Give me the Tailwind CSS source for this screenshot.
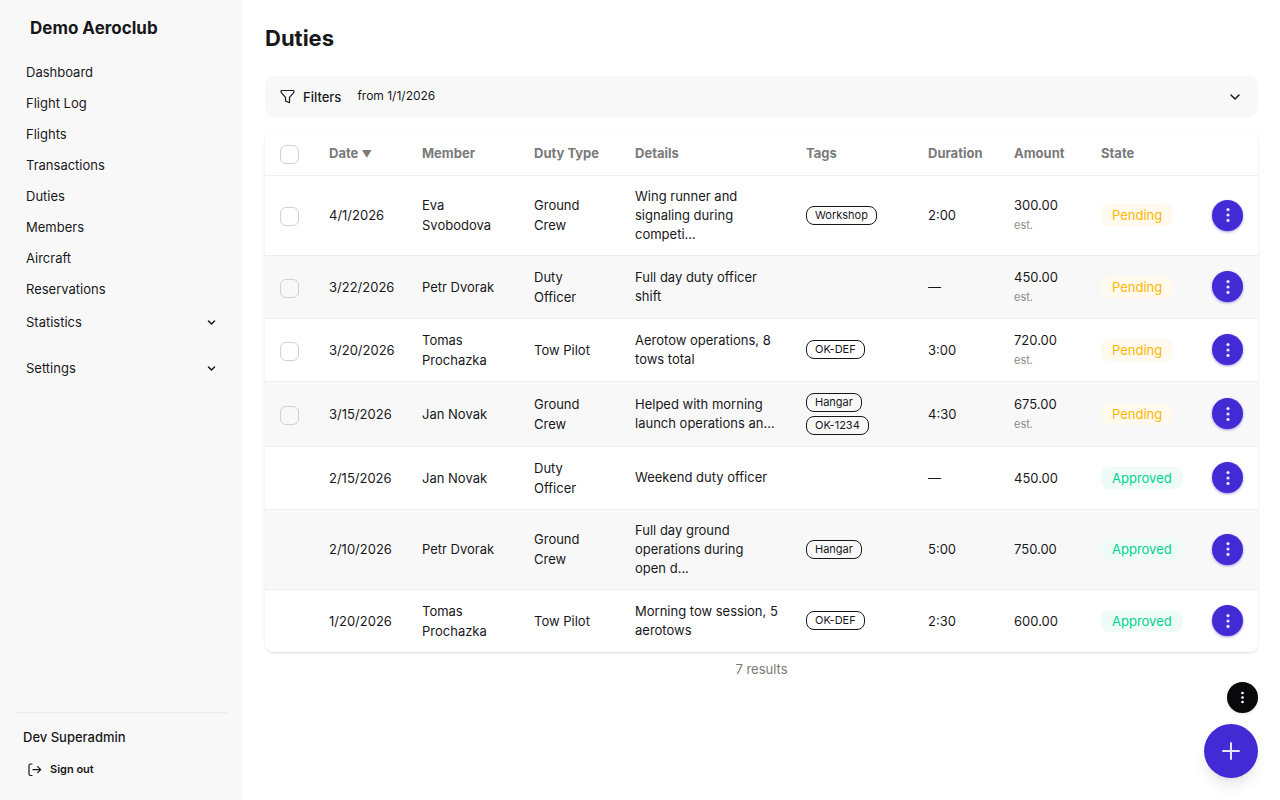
<!DOCTYPE html>
<html lang="en">
<head>
  <meta charset="UTF-8">
  <meta name="viewport" content="width=device-width, initial-scale=1.0">
  <title>Duties - Demo Aeroclub</title>
  <script src="https://cdn.jsdelivr.net/npm/@tailwindcss/browser@4"></script>
</head>
<body class="flex min-h-screen bg-white font-['Inter',sans-serif] text-[13px] leading-5 text-[#18181b]">

  <svg class="hidden">
    <symbol id="dots" viewBox="0 0 20 20">
      <circle cx="10" cy="4" r="1.8" fill="currentColor"/>
      <circle cx="10" cy="10" r="1.8" fill="currentColor"/>
      <circle cx="10" cy="16" r="1.8" fill="currentColor"/>
    </symbol>
    <symbol id="chevron" viewBox="0 0 12 12">
      <path d="M2 4l4 4 4-4" fill="none" stroke="currentColor" stroke-linecap="round" stroke-linejoin="round"/>
    </symbol>
  </svg>

  <!-- Sidebar -->
  <aside class="sticky top-0 flex h-screen w-[242px] shrink-0 flex-col bg-[#f8f8f8] px-[15px]">
    <div class="px-[15px] pt-[17px] text-[17px] font-bold leading-[22px]">Demo Aeroclub</div>
    <nav class="mt-[18px] flex flex-col">
      <a href="#" class="px-[11px] py-[5px] leading-[21px]">Dashboard</a>
      <a href="#" class="px-[11px] py-[5px] leading-[21px]">Flight Log</a>
      <a href="#" class="px-[11px] py-[5px] leading-[21px]">Flights</a>
      <a href="#" class="px-[11px] py-[5px] leading-[21px]">Transactions</a>
      <a href="#" class="px-[11px] py-[5px] leading-[21px]">Duties</a>
      <a href="#" class="px-[11px] py-[5px] leading-[21px]">Members</a>
      <a href="#" class="px-[11px] py-[5px] leading-[21px]">Aircraft</a>
      <a href="#" class="px-[11px] py-[5px] leading-[21px]">Reservations</a>
      <button type="button" class="mt-0.5 flex items-center justify-between px-[11px] py-[5px] text-left leading-[21px]">
        Statistics
        <svg class="h-[9px] w-[9px] stroke-2"><use href="#chevron"/></svg>
      </button>
      <button type="button" class="mt-[15px] flex items-center justify-between px-[11px] py-[5px] text-left leading-[21px]">
        Settings
        <svg class="h-[9px] w-[9px] stroke-2"><use href="#chevron"/></svg>
      </button>
    </nav>
    <div class="mt-auto border-t border-[#ebebeb] px-2 pb-[21px] pt-[14px]">
      <div class="font-medium">Dev Superadmin</div>
      <button type="button" class="mt-3 flex items-center gap-2 px-1 text-[11px] font-semibold">
        <svg class="h-[15px] w-[15px]" viewBox="0 0 15 15" fill="none" stroke="currentColor" stroke-width="1.2" stroke-linecap="round" stroke-linejoin="round">
          <path d="M5 2H3.500A1.500 1.500 0 0 0 2 3.500v8.500A1.500 1.500 0 0 0 3.500 13.500H5M6 7.700h7.700M10.700 4.700l3 3-3 3"/>
        </svg>
        Sign out
      </button>
    </div>
  </aside>

  <!-- Content -->
  <main class="min-w-0 flex-1 pb-4 pl-[23px] pr-[22px] pt-[23px]">
    <h1 class="text-[22px] font-bold leading-[30px]">Duties</h1>

    <button type="button" class="mt-[23px] flex h-[41px] w-full items-center rounded-lg bg-[#f8f8f8] px-[15px] text-left">
      <svg class="h-[15px] w-[15px]" viewBox="0 0 15 15" fill="none" stroke="currentColor" stroke-width="1.2" stroke-linejoin="round">
        <path d="M1.700 1.500h11.600q.7 0 .7.700v.8q0 .4-.3.700L9.500 8.300v5.400L5.500 12V8.300L1.300 3.700Q1 3.400 1 3v-.8q0-.7.7-.7z"/>
      </svg>
      <span class="ml-2 font-medium">Filters</span>
      <span class="ml-4 pb-0.5 text-xs">from 1/1/2026</span>
      <svg class="ml-auto mr-0.5 h-3 w-3 stroke-[1.5]"><use href="#chevron"/></svg>
    </button>

    <div class="mt-[15px] overflow-hidden rounded-lg shadow-sm">
      <table class="w-full table-fixed text-left">
        <thead class="text-[#7a7a7b]">
          <tr class="h-[43px] border-b border-[#f0f0f0]">
            <th class="w-[49px] px-[15px]"><input type="checkbox" aria-label="Select all" class="mt-0.5 block h-[19px] w-[19px] appearance-none rounded-md border border-[#d1d1d1] bg-white"></th>
            <th class="w-[93px] px-[15px]">Date <span class="text-[10px]">▼</span></th>
            <th class="w-[112px] px-[15px]">Member</th>
            <th class="w-[101px] px-[15px]">Duty Type</th>
            <th class="w-[171px] px-[15px]">Details</th>
            <th class="w-[122px] px-[15px]">Tags</th>
            <th class="w-[86px] px-[15px]">Duration</th>
            <th class="w-[87px] px-[15px]">Amount</th>
            <th class="w-[111px] px-[15px]">State</th>
            <th class="w-[61px] px-[15px]"></th>
          </tr>
        </thead>
        <tbody id="duties"></tbody>
      </table>
    </div>
    <p class="mt-[7px] text-center text-[#7a7a7b]">7 results</p>
  </main>

  <!-- Floating actions -->
  <div class="fixed bottom-[22px] right-[22px] flex flex-col items-end gap-[11px]">
    <button type="button" aria-label="More actions" class="flex h-[31px] w-[31px] items-center justify-center rounded-full bg-[#09090b] text-white shadow-sm">
      <svg class="h-[15px] w-[15px]"><use href="#dots"/></svg>
    </button>
    <button type="button" aria-label="Add duty" class="flex h-[54px] w-[54px] items-center justify-center rounded-full bg-[#422ad5] text-[#e0e7ff] shadow-lg">
      <svg class="h-[18px] w-[18px]" viewBox="0 0 18 18" fill="none" stroke="currentColor" stroke-width="2" stroke-linecap="round">
        <path d="M9 1v16M1 9h16"/>
      </svg>
    </button>
  </div>

  <script>
    const duties = [
      { date: "4/1/2026", member: "Eva Svobodova", type: "Ground Crew", details: "Wing runner and signaling during competi...", tags: ["Workshop"], duration: "2:00", amount: "300.00", pending: true },
      { date: "3/22/2026", member: "Petr Dvorak", type: "Duty Officer", details: "Full day duty officer shift", tags: [], duration: "—", amount: "450.00", pending: true },
      { date: "3/20/2026", member: "Tomas Prochazka", type: "Tow Pilot", details: "Aerotow operations, 8 tows total", tags: ["OK-DEF"], duration: "3:00", amount: "720.00", pending: true },
      { date: "3/15/2026", member: "Jan Novak", type: "Ground Crew", details: "Helped with morning launch operations an...", tags: ["Hangar", "OK-1234"], duration: "4:30", amount: "675.00", pending: true },
      { date: "2/15/2026", member: "Jan Novak", type: "Duty Officer", details: "Weekend duty officer", tags: [], duration: "—", amount: "450.00", pending: false },
      { date: "2/10/2026", member: "Petr Dvorak", type: "Ground Crew", details: "Full day ground operations during open&nbsp;d...", tags: ["Hangar"], duration: "5:00", amount: "750.00", pending: false },
      { date: "1/20/2026", member: "Tomas Prochazka", type: "Tow Pilot", details: "Morning tow session, 5 aerotows", tags: ["OK-DEF"], duration: "2:30", amount: "600.00", pending: false }
    ];

    const checkbox = d => `<input type="checkbox" aria-label="Select ${d.date}" class="mt-[3px] block h-[19px] w-[19px] appearance-none rounded-md border border-[#d1d1d1]">`;
    const tag = t => `<span class="rounded-lg border border-[#18181b] px-2 text-[11px] leading-[17px]">${t}</span>`;
    const pendingBadge = `<span class="inline-block rounded-lg bg-[#fff9ee] px-[11px] leading-[22px] text-[#fcb700]">Pending</span>`;
    const approvedBadge = `<span class="inline-block rounded-lg bg-[#effbf6] px-[11px] leading-[22px] text-[#00d390]">Approved</span>`;

    document.getElementById("duties").innerHTML = duties.map(d => `
      <tr class="border-b border-[#ededed] last:border-b-0 even:bg-[#f8f8f8]">
        <td class="px-[15px]">${d.pending ? checkbox(d) : ""}</td>
        <td class="px-[15px]">${d.date}</td>
        <td class="px-[15px] py-[11px]">${d.member}</td>
        <td class="px-[15px] py-[11px]">${d.type}</td>
        <td class="py-[11px] pl-[15px] pr-[11px] leading-[19px]">${d.details}</td>
        <td class="px-[15px] py-[11px]"><div class="flex flex-col items-start gap-1">${d.tags.map(tag).join("")}</div></td>
        <td class="px-[15px]">${d.duration}</td>
        <td class="px-[15px]">${d.amount}${d.pending ? `<div class="text-[11px] text-[#8b8b8c]">est.</div>` : ""}</td>
        <td class="px-[15px]">${d.pending ? pendingBadge : approvedBadge}</td>
        <td class="px-[15px]">
          <button type="button" aria-label="Actions" class="flex h-[31px] w-[31px] items-center justify-center rounded-full bg-[#422ad5] text-[#e0e7ff] shadow-sm shadow-[#422ad5]/40">
            <svg class="h-[18px] w-[18px]"><use href="#dots"/></svg>
          </button>
        </td>
      </tr>`).join("");
  </script>
</body>
</html>
